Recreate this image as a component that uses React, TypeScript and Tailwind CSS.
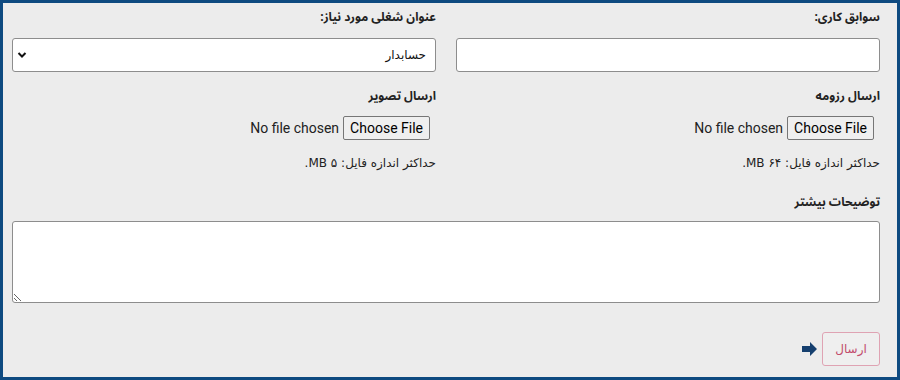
import React from "react";

const fa = { fontFamily: '"DejaVu Sans", "Noto Sans", sans-serif' };
const fb = { fontFamily: '"Noto Sans Arabic", "Noto Naskh Arabic", "DejaVu Sans", sans-serif' };
const ro = { fontFamily: 'Roboto, "Liberation Sans", sans-serif' };

function FileField({ label, note }: { label: string; note: string }) {
  return (
    <div className="flex flex-col items-stretch">
      <div className="mt-[15px] h-[20px] text-[12px] font-bold leading-[20px] text-[#222]" style={fb}>
        {label}
      </div>
      <div className="mt-[9px] flex h-[24px] items-center mr-[6px]" style={ro}>
        <button
          type="button"
          className="h-[24px] rounded-[2px] border border-[#767676] bg-[#efefef] px-[6px] text-[14px] leading-[20px] text-black"
          style={ro}
        >
          Choose File
        </button>
        <span className="mr-[4px] text-[14px] text-[#222]" dir="ltr">No file chosen</span>
      </div>
      <div className="mt-[14px] h-[18px] text-[12px] leading-[18px] text-[#222]" style={fa}>
        {note}
      </div>
    </div>
  );
}

export default function App() {
  return (
    <div className="h-[380px] w-[900px] border-[3px] border-[#0e4a80] bg-[#ececec]">
      <div dir="rtl" className="pl-[9px] pr-[17px] pt-[5px]">
        <div className="grid grid-cols-2 gap-x-[20px]">
          <div className="flex flex-col">
            <div className="h-[20px] text-[12px] font-bold leading-[20px] text-[#222]" style={fb}>
              سوابق کاری:
            </div>
            <div className="mt-[10px] h-[34px] rounded-[3px] border border-[#8d8d8d] bg-white" />
          </div>
          <div className="flex flex-col">
            <div className="h-[20px] text-[12px] font-bold leading-[20px] text-[#222]" style={fb}>
              عنوان شغلی مورد نیاز:
            </div>
            <div className="mt-[10px] flex h-[34px] items-center justify-between rounded-[3px] border border-[#8d8d8d] bg-white pl-[4px] pr-[9px]">
              <span className="text-[12px] text-[#111]" style={fa}>حسابدار</span>
              <svg width="10" height="8" viewBox="0 0 10 8">
                <path d="M1.5 2 L5 5.5 L8.5 2" fill="none" stroke="#111" strokeWidth="2" />
              </svg>
            </div>
          </div>
          <FileField label="ارسال رزومه" note="حداکثر اندازه فایل: ۶۴ MB." />
          <FileField label="ارسال تصویر" note="حداکثر اندازه فایل: ۵ MB." />
        </div>
        <div className="mt-[21px] h-[20px] text-[12px] font-bold leading-[20px] text-[#222]" style={fb}>
          توضیحات بیشتر
        </div>
        <textarea className="mt-[8px] block h-[82px] w-full rounded-[3px] border border-[#8d8d8d] bg-white" />
        <div className="mt-[29px] flex items-center gap-[4px]">
          <button
            type="button"
            className="h-[34px] w-[58px] rounded-[3px] border border-[#dfa3b3] bg-[#efefef] text-[12px] text-[#c24c6c]"
            style={fa}
          >
            ارسال
          </button>
          <svg width="16" height="14" viewBox="0 0 16 14">
            <polygon points="0,4 8,4 8,0 15,7 8,14 8,10 0,10" fill="#153f6e" />
          </svg>
        </div>
      </div>
    </div>
  );
}
